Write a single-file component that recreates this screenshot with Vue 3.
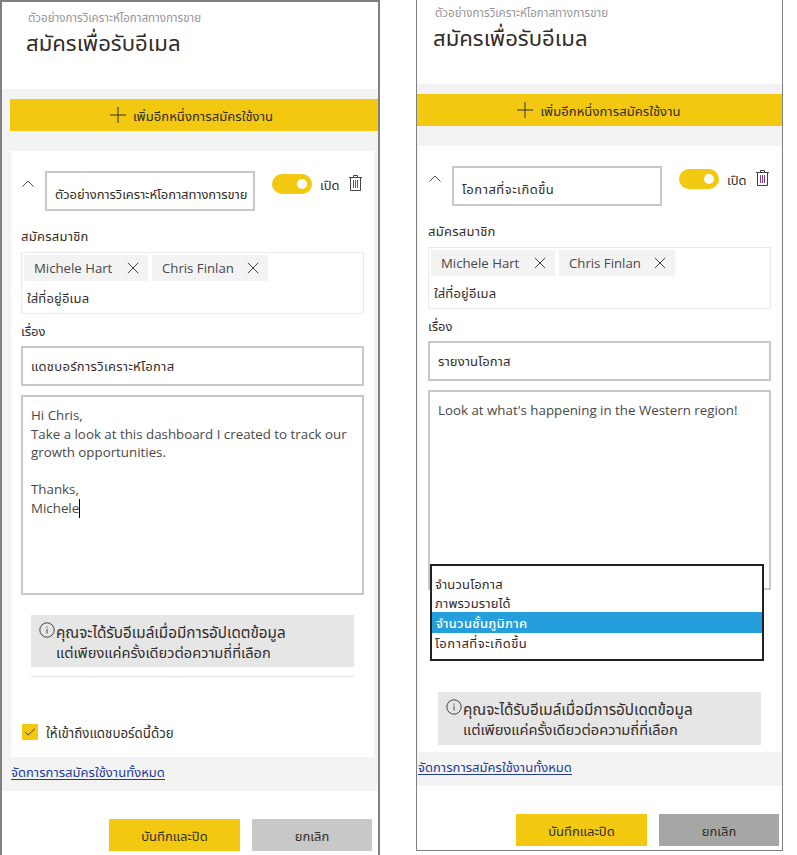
<script setup>
const chips = ['Michele Hart', 'Chris Finlan']
const options = ['จำนวนโอกาส', 'ภาพรวมรายได้', 'จำนวนชั้นภูมิภาค', 'โอกาสที่จะเกิดขึ้น']
const panels = [
  {
    id: 'dashboard',
    name: 'ตัวอย่างการวิเคราะห์โอกาสทางการขาย',
    subject: 'แดชบอร์การวิเคราะห์โอกาส',
    message: 'Hi Chris,\nTake a look at this dashboard I created to track our\ngrowth opportunities.\n\nThanks,\nMichele',
    caret: true,
    access: true,
    menu: false
  },
  {
    id: 'report',
    name: 'โอกาสที่จะเกิดขึ้น',
    subject: 'รายงานโอกาส',
    message: "Look at what's happening in the Western region!",
    caret: false,
    access: false,
    menu: true
  }
]
</script>

<template>
  <main class="page">
    <section v-for="p in panels" :key="p.id" class="panel" :class="p.id">
      <header class="head">
        <div class="crumb"><span>ตัวอย่างการวิเคราะห์โอกาสทางการขาย</span></div>
        <h1><span>สมัครเพื่อรับอีเมล</span></h1>
      </header>
      <div class="body">
        <button class="add">
          <svg width="16" height="16" viewBox="0 0 16 16"><path d="M8 0v16M0 8h16" /></svg>
          <span>เพิ่มอีกหนึ่งการสมัครใช้งาน</span>
        </button>
        <article class="card">
          <div class="name-row">
            <svg class="chevron" width="12" height="7" viewBox="0 0 12 7"><path d="M.5 6.500L6 1l5.500 5.500" /></svg>
            <div class="field name"><span>{{ p.name }}</span></div>
            <div class="toggle"><i></i></div>
            <span class="on">เปิด</span>
            <svg class="trash" width="13" height="16" viewBox="0 0 13 16">
              <path d="M0 2.500h13M4.500 2.500v-2h4v2M1.500 2.500v13h10v-13" />
              <path class="bars" d="M4.500 5v8M8.500 5v8" />
              <path class="bar-mid" d="M6.500 5v8" />
            </svg>
          </div>
          <div class="label subscribe"><span>สมัครสมาชิก</span></div>
          <div class="people">
            <div class="chips">
              <div v-for="c in chips" :key="c" class="chip">
                <span>{{ c }}</span>
                <svg width="12" height="12" viewBox="0 0 12 12"><path d="M.8.8l10.400 10.400M11.200.8L.8 11.200" /></svg>
              </div>
            </div>
            <div class="hint"><span>ใส่ที่อยู่อีเมล</span></div>
          </div>
          <div class="label about"><span>เรื่อง</span></div>
          <div class="field subject"><span>{{ p.subject }}</span></div>
          <div class="message"><span>{{ p.message }}</span><i v-if="p.caret" class="caret"></i></div>
          <ul v-if="p.menu" class="menu">
            <li v-for="(o, i) in options" :key="o" :class="{ picked: i === 2 }"><span>{{ o }}</span></li>
          </ul>
          <div class="note">
            <svg width="16" height="16" viewBox="0 0 16 16"><circle cx="8" cy="8" r="7.200" /><path d="M8 6.800v4.700M8 4.500v1.200" /></svg>
            <p><span class="n1">คุณจะได้รับอีเมล์เมื่อมีการอัปเดตข้อมูล</span><br><span class="n2">แต่เพียงแค่ครั้งเดียวต่อความถี่ที่เลือก</span></p>
          </div>
          <template v-if="p.access">
            <hr>
            <div class="access">
              <span class="box"><svg width="12" height="8" viewBox="0 0 12 8"><path d="M1 3.800l3.200 3.200L11 .8" /></svg></span>
              <span class="access-text">ให้เข้าถึงแดชบอร์ดนี้ด้วย</span>
            </div>
          </template>
        </article>
        <a class="manage"><span>จัดการการสมัครใช้งานทั้งหมด</span></a>
      </div>
      <footer>
        <button class="save"><span>บันทึกและปิด</span></button>
        <button class="cancel"><span>ยกเลิก</span></button>
      </footer>
    </section>
  </main>
</template>

<style>
body { background: #fff; overflow: hidden; }
</style>

<style scoped>
* { box-sizing: border-box; }
.page {
  display: flex; align-items: flex-start; height: 855px; overflow: hidden;
  font: 13px/18px "Open Sans", "Noto Sans Thai", "Noto Sans", sans-serif; color: #332c28;
}
span { white-space: pre; }
button { border: 0; padding: 0; font: inherit; color: inherit; display: flex; align-items: center; justify-content: center; }
svg { fill: none; stroke: #444; stroke-width: 1; flex: none; display: block; }
.panel { flex: none; border: 2px solid #808080; background: #fff; }
.dashboard { width: 380px; height: 870px; }
.report { width: 367px; height: 851px; margin-left: 36px; border-width: 0 1px 1px; }
.head { height: 87px; padding: 7px 0 0 26px; }
.report .head { height: 84px; padding: 4px 0 0 18px; }
.crumb { font-size: 11.550px; line-height: 18px; color: #969696; }
h1 { margin: 1px 0 0 -2px; font-size: 22.150px; line-height: 28px; font-weight: 400; }
.body { height: 702px; background: #f3f3f3; padding: 10px 0 0 8px; }
.report .body { padding-left: 0; }
.add { width: 100%; height: 32px; background: #f2c811; gap: 7px; padding-right: 5px; }
.add span { padding-top: 2px; letter-spacing: .08px; }
.report .add { padding-right: 1px; }
.add svg { stroke: #333; }
.card { position: relative; width: 363px; height: 606px; margin: 20px 0 0 1px; padding: 20px 10px 0; background: #fff; }
.name-row { display: flex; align-items: flex-start; height: 40px; }
.chevron { margin: 9px 11px 0 1px; }
.field { border: 2px solid #c8c8c8; height: 40px; display: flex; align-items: center; padding: 0 8px; }
.name { width: 210px; padding-top: 6px; letter-spacing: -.08px; }
.report .name { letter-spacing: .5px; }
.subject { letter-spacing: .3px; }
.report .subject { letter-spacing: .1px; }
.toggle { width: 40px; height: 20px; border-radius: 10px; margin: 3px 8px 0 17px; background: #f2c811; display: flex; justify-content: flex-end; padding: 5px; }
.toggle i { width: 10px; height: 10px; border-radius: 50%; background: #fff; }
.on { margin-top: 5px; width: 20px; }
.trash { margin: 4px 0 0 9px; }
.bars { stroke: #804080; }
.bar-mid { stroke: #3f8050; }
.report .bar-mid { stroke: #804080; }
.label { line-height: 20px; height: 20px; }
.subscribe { margin-top: 15px; letter-spacing: .25px; }
.people { margin-top: 6px; height: 62px; border: 1px solid #eaeaea; padding: 2px; }
.chips { display: flex; gap: 4px; }
.chip { height: 26px; background: #f3f3f3; display: flex; align-items: center; justify-content: space-between; padding: 0 9px 0 10px; width: 124px; color: #484848; font-size: 13.200px; }
.chip:last-child { width: 116px; }
.hint { padding: 8px 0 0 3px; letter-spacing: .15px; }
.about { margin-top: 7px; }
.subject { margin-top: 5px; }
.message { margin-top: 9px; height: 200px; border: 2px solid #c8c8c8; padding: 9px 8px; font-size: 13.320px; line-height: 18.600px; color: #484848; }
.caret { display: inline-block; width: 1px; height: 19px; background: #000; vertical-align: -5px; }
.menu { position: absolute; left: 12px; top: 418px; width: 334px; height: 97px; margin: 0; padding: 7px 0 0; list-style: none; border: 2px solid #212121; background: #fff; }
.menu li { height: 20px; line-height: 20px; padding-left: 3px; letter-spacing: .15px; }
.menu li:first-child { height: 19px; line-height: 22px; }
.menu li:nth-child(2) { line-height: 22px; }
.menu .picked { height: 21px; line-height: 22px; background: #259fdb; color: #fff; letter-spacing: .3px; font-weight: 500; padding-left: 4px; }
.menu li:last-child { letter-spacing: .5px; }
.note { margin: 20px 10px 0; height: 52px; background: #e6e6e6; display: flex; padding: 7px 0 0 8px; font-size: 14.650px; line-height: 20px; }
.report .note { margin-top: 102px; height: 53px; }
.note p { margin: 0 0 0 1px; }
.n1 { font-size: 15.250px; }
hr { border: 0; height: 1px; background: #e2e2e2; margin: 9px 10px 0; }
.access { margin: 45px 0 0 1px; display: flex; align-items: center; gap: 8px; }
.access-text { font-size: 13.350px; padding-top: 2px; }
.box { width: 16px; height: 16px; background: #f2c811; display: flex; align-items: center; justify-content: center; }
.manage { display: inline-block; margin: 5px 0 0 1px; color: #223c96; border-bottom: 1px solid #223c96; line-height: 20px; height: 18px; letter-spacing: .04px; }
footer { display: flex; justify-content: flex-end; gap: 12px; padding: 28px 6px 0 0; }
.report footer { padding-right: 3px; }
footer button { height: 32px; padding-top: 2px; }
.save { width: 131px; background: #f2c811; }
.cancel { width: 120px; background: #c8c8c8; }
.report .cancel { background: #a6a6a6; }
</style>
